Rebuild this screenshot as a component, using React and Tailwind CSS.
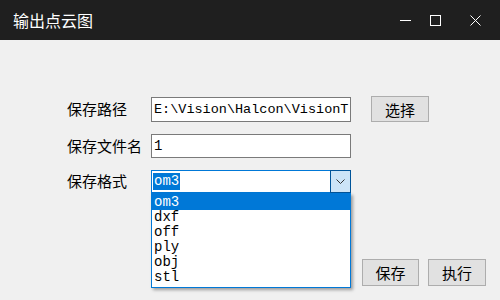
import React from 'react'

const CJK = "font-['Noto_Sans_CJK_SC',sans-serif]"
const MONO = "font-['Liberation_Mono','Noto_Sans_CJK_SC',monospace]"

const FORMATS = ['om3', 'dxf', 'off', 'ply', 'obj', 'stl']

function TitleBar() {
  return (
    <div className="h-[40px] bg-[#1f1f1f] flex items-center pl-[13px] text-white">
      <span className={`${CJK} text-[16px] leading-none flex-1`}>输出点云图</span>
      <div className="flex items-center h-full">
        <div className="w-[30px] h-full flex items-center justify-center">
          <div className="w-[11px] h-px bg-white" />
        </div>
        <div className="w-[30px] h-full flex items-center justify-center">
          <div className="w-[11px] h-[11px] border border-white" />
        </div>
        <div className="w-[50px] h-full flex items-center justify-center">
          <svg width="11" height="11" viewBox="0 0 11 11" stroke="white" strokeWidth="1">
            <path d="M0.5 0.5 L10.5 10.5 M10.5 0.5 L0.5 10.5" />
          </svg>
        </div>
      </div>
    </div>
  )
}

function Button({ children, className = '' }) {
  return (
    <button
      className={`${CJK} bg-[#e1e1e1] border border-[#adadad] text-[15px] leading-none text-black flex items-center justify-center ${className}`}
    >
      {children}
    </button>
  )
}

export default function App() {
  return (
    <div className="w-[500px] h-[300px] bg-[#f0f0f0] flex flex-col overflow-hidden">
      <TitleBar />
      <div className="relative flex-1 pl-[67px] pt-[56px]">
        {/* path row */}
        <div className="flex items-center h-[26px]">
          <span className={`${CJK} w-[84px] text-[15px] text-black`}>保存路径</span>
          <div className={`${MONO} w-[200px] h-[25px] border border-[#7a7a7a] bg-white text-[13.5px] leading-[23px] pl-[2px] overflow-hidden whitespace-nowrap text-black`}>
            E:\Vision\Halcon\VisionT
          </div>
          <Button className="ml-[20px] w-[58px] h-[26px]">选择</Button>
        </div>

        {/* file name row */}
        <div className="flex items-center h-[24px] mt-[12px]">
          <span className={`${CJK} w-[84px] text-[15px] text-black`}>保存文件名</span>
          <div className={`${MONO} w-[200px] h-[24px] border border-[#7a7a7a] bg-white text-[14px] leading-[22px] pl-[2px] text-black`}>
            1
          </div>
        </div>

        {/* format row */}
        <div className="flex items-center h-[23px] mt-[12px]">
          <span className={`${CJK} w-[84px] text-[15px] text-black`}>保存格式</span>
          <div className="relative w-[200px] h-[23px] border border-[#0078d7] bg-white flex">
            <div className="flex-1 flex items-center pl-px">
              <span className={`${MONO} bg-[#0078d7] text-white text-[14px] leading-[17px] px-px`}>om3</span>
            </div>
            <div className="w-[21px] -my-px -mr-px border border-[#005499] bg-[#cce4f7] flex items-center justify-center">
              <svg width="9" height="5" viewBox="0 0 9 5" fill="none" stroke="#333" strokeWidth="1">
                <path d="M0.5 0.5 L4.5 4.5 L8.5 0.5" />
              </svg>
            </div>

            {/* dropdown list */}
            <div className="absolute left-[-1px] top-[22px] w-[200px] bg-white border border-[#0078d7] shadow-[2px_2px_3px_rgba(0,0,0,0.35)] z-10 pb-[2px]">
              {FORMATS.map((f, i) => (
                <div
                  key={f}
                  className={`${MONO} text-[14px] h-[15px] leading-[15px] pl-[2px] ${
                    i === 0 ? 'bg-[#0078d7] text-white h-[16px] leading-[16px]' : 'text-black'
                  }`}
                >
                  {f}
                </div>
              ))}
            </div>
          </div>
        </div>

        {/* action buttons */}
        <div className="absolute right-[14px] bottom-[14px] flex gap-[9px]">
          <Button className="w-[57px] h-[27px]">保存</Button>
          <Button className="w-[58px] h-[27px]">执行</Button>
        </div>
      </div>
    </div>
  )
}
